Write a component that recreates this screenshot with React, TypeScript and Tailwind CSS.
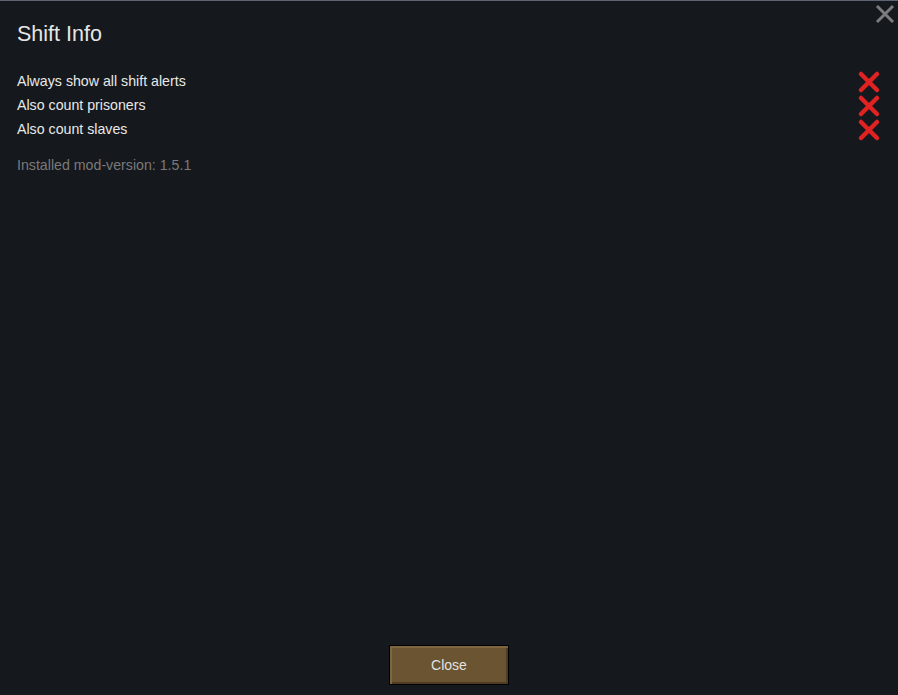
import React from "react";

function RedCross() {
  return (
    <svg width="24" height="24" viewBox="0 0 24 24" className="block">
      <path d="M4 4 L20 20 M20 4 L4 20" stroke="#e02222" strokeWidth="4.5" strokeLinecap="round" />
    </svg>
  );
}

const settings = ["Always show all shift alerts", "Also count prisoners", "Also count slaves"];

export default function App() {
  return (
    <div
      className="w-[898px] h-[695px] bg-[#15181c] border-t border-[#5d6372] flex flex-col relative"
      style={{ fontFamily: '"Liberation Sans", Arial, sans-serif' }}
    >
      <button className="absolute right-[3px] top-[3px] w-[20px] h-[20px]">
        <svg width="20" height="20" viewBox="0 0 20 20" className="block">
          <path d="M2 2 L18 18 M18 2 L2 18" stroke="#7b7c7e" strokeWidth="3" />
        </svg>
      </button>

      <div className="flex-1 pl-[17px] pr-[17px] pt-[21px]">
        <h1 className="text-[21.5px] leading-[24px] text-[#e6e6e6]">Shift Info</h1>
        <div className="mt-[24px] flex flex-col">
          {settings.map((s) => (
            <div key={s} className="h-[24px] flex items-center justify-between">
              <span className="text-[14.2px] text-[#e8e8e8]">{s}</span>
              <RedCross />
            </div>
          ))}
        </div>
        <p className="mt-[13px] text-[14.2px] text-[#7a7a7a]">Installed mod-version: 1.5.1</p>
      </div>

      <div className="flex justify-center pb-[10px]">
        <button className="w-[120px] h-[40px] border border-black bg-[#6a5431] text-[14px] leading-[34px] text-[#e2e2e2] shadow-[inset_2px_2px_0_#7d6640,inset_-2px_-2px_0_#4e3d22]">
          Close
        </button>
      </div>
    </div>
  );
}
